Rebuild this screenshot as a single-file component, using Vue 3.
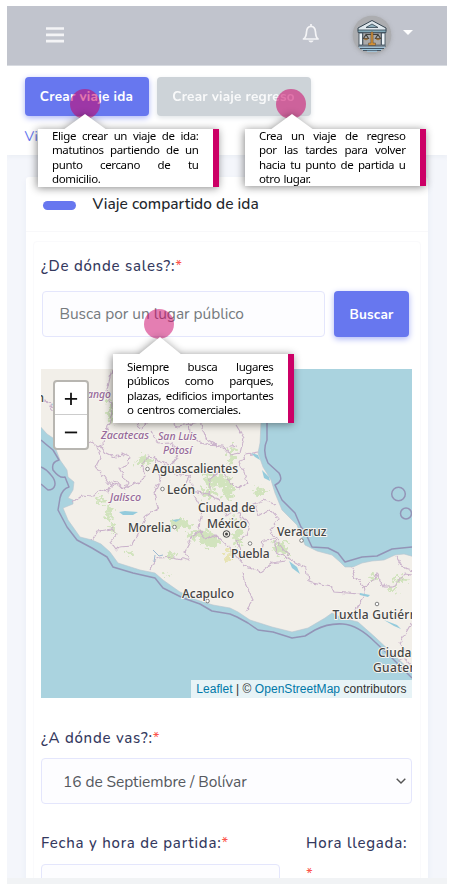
<script setup>
const callouts = [
  { id: 'ida', lines: ['Elige crear un viaje de ida:', 'matutinos partiendo de un', 'punto cercano de tu', 'domicilio.'] },
  { id: 'regreso', lines: ['Crea un viaje de regreso', 'por las tardes para volver', 'hacia tu punto de partida u', 'otro lugar.'] },
  { id: 'lugar', lines: ['Siempre busca lugares', 'públicos como parques,', 'plazas, edificios importantes', 'o centros comerciales.'] }
]

const borders = [
  'M41 400 48 402 56 414 70 425 77 448 92 442 99 447 104 440 110 420 112 405 107 390 112 369',
  'M112 407 123 420 128 414 141 428 150 421 166 420 178 426 200 422 207 440 223 448 236 445',
  'M97 447 101 456 96 466 106 480 112 487 114 480 124 489 128 483 119 468 128 464 129 457 121 453 116 458 106 453 100 445',
  'M73 502 82 495 93 496 99 489 107 492 112 483 124 488 138 483 146 475 142 465 148 456 158 458 166 467 174 462 181 450 170 443 158 444 150 431',
  'M153 456 161 477 154 493 158 508 146 516 139 533 132 546 119 547 116 550 110 542 117 534 112 529 98 531 92 540',
  'M153 457 169 465 174 474 190 476 193 491 208 494 210 479 222 470 228 480 239 489 247 482 244 471 240 463 246 455 258 453',
  'M190 475 185 485 194 496 202 510 199 528 205 540 216 535 228 546 235 555 244 566 260 572 272 563 286 561',
  'M150 570 154 562 159 558 174 557 190 561 185 551 193 535 203 530',
  'M243 572 246 584 253 600 246 611',
  'M207 495 220 500 226 515 235 510 249 524 246 535 237 541 242 557 260 553 263 540 274 539 277 552 288 558 306 568 308 581 331 586 334 592 360 594',
  'M288 556 278 542 270 530 279 519 270 509 259 516 254 504 264 500 275 505',
  'M352 567 355 577 364 585 365 594 358 605 351 619',
  'M362 589 374 580 376 573 383 587 393 587 405 574 412 575',
  'M396 556 402 567 412 570',
  'M189 421 190 434 203 444 222 445 230 455 240 453 244 438 236 425',
  'M412 622 400 643 405 650M397 662 405 659 412 667'
]

const greens = [
  [144, 461, 8, 4], [126, 380, 5, 10], [111, 412, 3, 12], [214, 480, 11, 7], [223, 484, 10, 4],
  [207, 493, 9, 4], [231, 456, 3, 10], [228, 488, 5, 12], [261, 492, 7, 3], [109, 514, 3, 8],
  [113, 527, 2, 8], [180, 524, 10, 5], [199, 535, 14, 5], [211, 541, 10, 6], [238, 536, 4, 12],
  [280, 548, 8, 6], [285, 553, 5, 3], [130, 553, 3, 2], [170, 555, 4, 3], [166, 574, 3, 1],
  [100, 500, 4, 3], [393, 589, 6, 2], [400, 579, 8, 2], [373, 577, 2, 3], [235, 522, 3, 4]
]

const states = [
  { x: 87, y: 398, w: 24, t: 'ango' },
  { x: 101, y: 439, w: 48, t: 'Zacatecas' },
  { x: 158, y: 440, w: 39, t: 'San Luis' },
  { x: 163, y: 454, w: 29, t: 'Potosí' },
  { x: 110, y: 501, w: 31, t: 'Jalisco' }
]

const cities = [
  { x: 152, y: 473, t: 'Aguascalientes', w: 86 },
  { x: 167, y: 494, t: 'León', w: 28 },
  { x: 198, y: 512, t: 'Ciudad de', w: 57.5 },
  { x: 207, y: 527.5, t: 'México', w: 40 },
  { x: 128, y: 531.5, t: 'Morelia', w: 43 },
  { x: 277, y: 536, t: 'Veracruz', w: 49.5 },
  { x: 231, y: 558, t: 'Puebla', w: 38.5 },
  { x: 182, y: 597.5, t: 'Acapulco', w: 52 },
  { x: 332.5, y: 618.5, t: 'Tuxtla Gutiérrez', w: 95 },
  { x: 378, y: 657, t: 'Ciudad de', w: 59 },
  { x: 373, y: 672, t: 'Guatemala', w: 66 }
]

const dots = [[147.5, 469], [162.5, 489], [174.5, 527], [301.5, 540.5], [250, 543.5], [207.5, 601], [377, 604]]
</script>

<template>
  <div class="screen">
    <div class="page">
      <header class="topbar">
        <svg class="menu" viewBox="0 0 18 16"><path d="M0 1.5h18M0 7.8h18M0 14.1h18" /></svg>
        <svg class="bell" viewBox="0 0 18 20">
          <path d="M9 1v2M2 16h14c-1.8-1.4-2.3-3-2.5-7C13.300 5.300 11.700 3.300 9 3.300S4.700 5.300 4.500 9C4.300 13 3.800 14.600 1.500 16Z" />
          <path class="clapper" d="M6.300 17.500h5.400Q10.800 19.600 9 19.600T6.300 17.500Z" />
        </svg>
        <svg class="avatar" viewBox="0 0 40 40">
          <circle cx="20" cy="20" r="19.300" fill="#acadb0" />
          <path d="M6 13 20 5.500 34 13v2.500H6Z" fill="#dfe8ed" stroke="#344450" />
          <path d="m14 12.500 6-3.500 6 3.500Z" fill="#8fb0be" stroke="#344450" stroke-width=".8" />
          <path d="M6 15h28v2.500H6Z" fill="#82a9b8" stroke="#344450" stroke-width=".8" />
          <path d="M11 18h18v12H11Z" fill="#aaa" stroke="#596068" stroke-width=".7" />
          <path d="M7 18h3.500v12H7ZM29.500 18H33v12h-3.500Z" fill="#edf4f8" stroke="#344450" stroke-width=".8" />
          <path d="M20 17v12M13.500 19.500h13M14 19.500l-2.500 4h5ZM26 19.500l-2.500 4h5Z" fill="none" stroke="#40403d" stroke-width="1.100" />
          <path d="M18.900 17h2.200v11h2.400v2.500h-7V28h2.400ZM11.500 23.500h5q-2.500 3-5 0M23.500 23.500h5q-2.500 3-5 0" fill="#cf8f38" stroke="#5a4630" stroke-width=".5" />
          <path d="M6 31h28M8 33.500h24M11 35.500h18" stroke="#435666" />
          <path d="M7 32.300h26M10 34.500h20M15 36.300h10" stroke="#9fc8df" stroke-width="1.100" />
        </svg>
        <i class="caret"></i>
      </header>

      <section class="actions">
        <div class="buttons">
          <button class="btn primary"><span class="t-ida">Crear viaje ida</span></button>
          <button class="btn muted"><span class="t-reg">Crear viaje regreso</span></button>
        </div>
        <a class="crumb">Viajes</a>
      </section>

      <main class="card">
        <div class="card-head"><i class="pill"></i><h1>Viaje compartido de ida</h1></div>
        <div class="card-body">
          <label class="l-from">¿De dónde sales?:<b>*</b></label>
          <div class="search">
            <div class="field"><span>Busca por un lugar público</span></div>
            <button class="btn primary find"><span>Buscar</span></button>
          </div>

          <div class="map">
            <svg class="tiles" viewBox="41 369 371 329">
              <defs>
                <filter id="rough" x="-5%" y="-5%" width="110%" height="110%">
                  <feTurbulence type="fractalNoise" baseFrequency=".16" numOctaves="2" seed="4" />
                  <feDisplacementMap in="SourceGraphic" scale="6" xChannelSelector="R" yChannelSelector="G" />
                </filter>
                <filter id="speckle" x="-5%" y="-5%" width="110%" height="110%">
                  <feTurbulence type="fractalNoise" baseFrequency=".25" numOctaves="2" seed="8" />
                  <feDisplacementMap in="SourceGraphic" scale="17" xChannelSelector="R" yChannelSelector="G" />
                </filter>
              </defs>
              <path fill="#aad3df" d="M41 369h371v329H41Z" />
              <path class="land" d="M38 366V424L47 434 53 438 55 447 60 460 67 470 68 477 74 482 73 490 68 498 73 500 73 504 63 508 68 520 73 527 80 537 92 540 101 544 110 552 118 563 140 570 155 573 163 580 180 592 197 600 213 605 230 608 238 612 250 620 272 627 292 632 308 628 325 618 332 613 342 618 358 622 375 637 392 653 415 675V557L404 554 395 555 384 560 372 561 362 563 353 567 345 567 340 562 332 555 317 551 305 545 300 533 297 525 282 510 275 493 271 480 263 467 258 453 260 443 261 423V366Z" />
              <g filter="url(#speckle)" fill="#c5dfad" opacity=".72">
                <ellipse v-for="(g, i) in greens" :key="i" :cx="g[0]" :cy="g[1]" :rx="g[2]" :ry="g[3]" />
                <ellipse cx="229" cy="555" rx="3" ry="7" fill="#e3df9d" />
              </g>
              <g filter="url(#rough)" class="borders"><path v-for="d in borders" :key="d" :d="d" /></g>
              <path fill="#94cbdc" d="m119 512 6-1 13 1-5 3h-10ZM262 470l7 7 1 4-6-3ZM289 561l8 6 3 7-8-6ZM360 593l10 2-2 2-8-2ZM384 620l13 5 4 4-7-3ZM251 453l7 2 2 5-5-3ZM172 520l9-1-5 3ZM52 404l7-4-5 8Z" />
              <path fill="none" stroke="#9cb8d1" d="m153 550 6 6 4-1M155 555l-1 7" />
              <g class="sea">
                <path d="M41 440Q48 446 53 450L59 460Q51 462 53 470 60 479 65 477L69 487Q62 489 60 498L58 510 67 527 77 540 92 548 107 557 113 567 133 573 155 578 163 588 173 593 183 598 200 604 212 611 230 614 237 617 248 623 258 630 273 632 292 638 305 636 315 630Q328 623 343 624T375 642L392 658 412 678" />
                <path d="M267 423V440Q262 451 268 463L279 473Q284 481 275 485L282 500 295 513 301 527 305 532 312 547 328 548 338 553 345 562 362 557 377 556 392 549 412 547" />
                <circle cx="398.500" cy="494" r="6.800" /><circle cx="406" cy="513.500" r="5.500" />
                <path d="M41 467Q46 469 51 475C58 483 55 490 48 490L41 484" />
              </g>
              <g class="state-names"><text v-for="s in states" :key="s.t" :x="s.x" :y="s.y" :textLength="s.w" lengthAdjust="spacingAndGlyphs">{{ s.t }}</text></g>
              <g class="places"><circle v-for="d in dots" :key="d[0]" :cx="d[0]" :cy="d[1]" r="1.800" /></g>
              <circle cx="226.500" cy="534" r="3.300" fill="none" stroke="#444" /><circle cx="226.500" cy="534" r="1.500" fill="#444" />
              <g class="city-names">
                <text x="44" y="402" text-anchor="end">n</text>
                <text v-for="c in cities" :key="c.t + c.y" :x="c.x" :y="c.y" :textLength="c.w">{{ c.t }}</text>
              </g>
            </svg>
            <div class="zoomer">
              <svg viewBox="0 0 34 33"><path d="M10.500 17.500h13M17 11v13" /></svg>
              <svg viewBox="0 0 34 33"><path d="M10.500 17.500h13" /></svg>
            </div>
            <div class="credit"><a>Leaflet</a> | © <a>OpenStreetMap</a> contributors</div>
          </div>

          <label class="l-to">¿A dónde vas?:<b>*</b></label>
          <div class="select">
            <span>16 de Septiembre / Bolívar</span>
            <svg viewBox="0 0 10 6"><path d="m.7.7 4.300 4.300L9.300.7" /></svg>
          </div>
          <div class="times">
            <div class="depart"><label>Fecha y hora de partida:<b>*</b></label><div class="input"></div></div>
            <div class="arrive"><label>Hora llegada:</label><b>*</b></div>
          </div>
        </div>
      </main>
    </div>

    <template v-for="c in callouts" :key="c.id">
      <i class="spot" :class="c.id"></i>
      <aside class="callout" :class="c.id">
        <svg class="tip" viewBox="0 0 44 16" preserveAspectRatio="none"><path d="M0 16 22 0 44 16Z" /></svg>
        <div class="note"><p v-for="l in c.lines" :key="l">{{ l }}</p></div>
      </aside>
    </template>
  </div>
</template>

<style>
body { margin: 0; background: #fff; }
</style>

<style scoped>
* { box-sizing: border-box; }
.screen { position: relative; width: 455px; height: 890px; padding: 6px 8px 6px 7px; overflow: hidden; background: #fff; font-family: Nunito, Lato, sans-serif; }
.page { height: 878px; overflow: hidden; background: #f4f6fb; border-bottom: 6px solid #f1f3f5; }
.topbar { height: 60px; background: #c1c4cd; display: flex; align-items: center; border-bottom: 1px solid #d8dbe0; }
.menu { width: 18px; height: 16px; margin-left: 39px; margin-top: -1px; }
.menu path { stroke: #f4f4f6; stroke-width: 2.7; }
.bell { width: 18px; height: 20px; margin-left: 238px; margin-top: -5px; fill: none; stroke: #f4f4f6; stroke-width: 1.7; stroke-linejoin: round; }
.bell .clapper { fill: #f4f4f6; stroke: none; }
.avatar { width: 40px; height: 40px; margin-left: 32px; margin-top: -1px; fill: none; filter: drop-shadow(0 1px 2px #8886); }
.caret { margin-left: 11px; margin-top: -6px; border: 5px solid transparent; border-top-color: #fff; border-bottom: 0; }
.actions { height: 89px; background: #fff; padding: 11px 17.500px 0; box-shadow: 0 2px 4px #dfe3ee66; }
.buttons { display: flex; gap: 8px; }
.btn { border: 0; border-radius: 4px; height: 39px; padding: 0; color: #fff; font: 700 13.500px Nunito, Lato, sans-serif; white-space: nowrap; }
.primary { background: #6777ef; box-shadow: 0 2px 6px #acb5f6; width: 124px; }
.muted { background: #cdd3d8; width: 154px; box-shadow: 0 2px 5px #e1e5e8; }
.muted span { opacity: .88; }
.t-ida { letter-spacing: .28px; }
.t-reg { letter-spacing: .24px; }
.crumb { display: block; margin-top: 12px; font-size: 14px; line-height: 18px; color: #6777ef; }
.card { margin: 22px 19px 0 18.500px; height: 720px; background: #fff; border-radius: 3px; box-shadow: 0 3px 6px #e9ecf5; }
.card-head { height: 55px; border-bottom: 1px solid #f8f8fa; display: flex; align-items: center; padding-left: 17.500px; }
.pill { width: 33px; height: 9px; border-radius: 5px; background: #6777ef; margin-top: 3px; }
h1 { margin: 0 0 1px 16.500px; font-size: 15.500px; font-weight: 500; color: #22262b; letter-spacing: .04px; }
.card-body { margin: 9px 7px 0; padding: 0 7.500px; border: 1px solid #fafafc; height: 660px; border-radius: 4px; }
label { display: block; font-size: 15px; line-height: 20px; font-weight: 500; color: #34395e; letter-spacing: .76px; white-space: nowrap; }
b { color: #fc544b; font-weight: 400; }
.l-from { margin-top: 14px; }
.search { display: flex; align-items: center; margin: 15px 3px 32px 1px; gap: 9px; }
.field { width: 283px; height: 46px; border: 1px solid #e4e6fc; border-radius: 4px; background: #fdfdff; padding-left: 16.500px; line-height: 44px; font-size: 15.500px; letter-spacing: -.04px; color: #757a7e; }
.find { width: 75px; height: 46px; letter-spacing: .25px; }
.map { position: relative; width: 371px; height: 329px; overflow: hidden; }
.tiles { display: block; width: 371px; height: 329px; }
.land { fill: #f2efe9; stroke: #b9c4ce; stroke-width: .6; }
.borders { fill: none; stroke: #cab2cb; stroke-width: 1.1; }
.sea { fill: none; stroke: #918eb3; stroke-width: 1.500; stroke-linejoin: round; opacity: .9; }
.tiles text { font-family: "Noto Sans", sans-serif; paint-order: stroke; stroke: #f7f5f0; stroke-width: 2px; stroke-linejoin: round; }
.state-names text { font-size: 11px; font-style: italic; font-weight: 500; fill: #96699a; }
.city-names text { font-size: 12px; font-weight: 500; fill: #444; }
.places { fill: #fff; stroke: #666; stroke-width: .8; }
.zoomer { position: absolute; left: 12px; top: 11px; width: 36px; height: 70px; border: 2px solid #b8b6b1; border-radius: 4px; background: #fff; }
.zoomer svg { display: block; width: 32px; height: 33px; stroke: #111; stroke-width: 1.900; }
.zoomer svg:first-child { border-bottom: 1px solid #ccc; }
.credit { position: absolute; right: 0; bottom: 0; width: 221px; height: 18px; background: #ffffffb8; color: #333; font: 12px/18px "Liberation Sans", sans-serif; letter-spacing: .04px; text-align: center; white-space: nowrap; }
.credit a { color: #0078a8; }
.l-to { margin-top: 30px; }
.select { margin-top: 10px; width: 371px; height: 46px; border: 1px solid #e4e6fc; border-radius: 4px; background: #fdfdff; display: flex; align-items: center; justify-content: space-between; padding: 0 5px 0 21px; color: #55595e; font-size: 15.500px; letter-spacing: -.06px; }
.select svg { width: 10px; height: 6px; fill: none; stroke: #555; stroke-width: 1.400; }
.times { display: flex; gap: 26px; margin-top: 29px; }
.depart { width: 239px; }
.input { margin-top: 11px; height: 46px; border: 1px solid #e4e6fc; border-radius: 4px; background: #fdfdff; }
.arrive b { display: block; font-size: 15px; line-height: 20px; margin-top: 11px; }
.spot { position: absolute; width: 30px; height: 30px; border-radius: 50%; background: #cc006688; }
.spot.ida { left: 70px; top: 89px; }
.spot.regreso { left: 276px; top: 89px; }
.spot.lugar { left: 144px; top: 309px; background: #cc006680; }
.callout { position: absolute; width: 181px; filter: drop-shadow(-1px 1px 4px #0007); }
.callout.ida { left: 38px; top: 114px; }
.callout.regreso { left: 245px; top: 114px; }
.callout.lugar { left: 113px; top: 337px; }
.tip { display: block; width: 44px; height: 16px; margin-left: 25px; margin-bottom: -1px; fill: #fff; }
.note { height: 58px; background: #fff; border-right: 6px solid #cc0066; padding: 0 14.500px 0 14px; }
.regreso .note { height: 57px; }
.lugar .note { height: 69px; padding-top: 6px; }
.lugar .tip { height: 18px; }
.note p { margin: 0; font: 11.500px/14.300px "Noto Sans", sans-serif; letter-spacing: -.38px; word-spacing: .8px; color: #000; white-space: nowrap; text-align-last: justify; }
.note p:last-child { text-align-last: left; }
</style>
